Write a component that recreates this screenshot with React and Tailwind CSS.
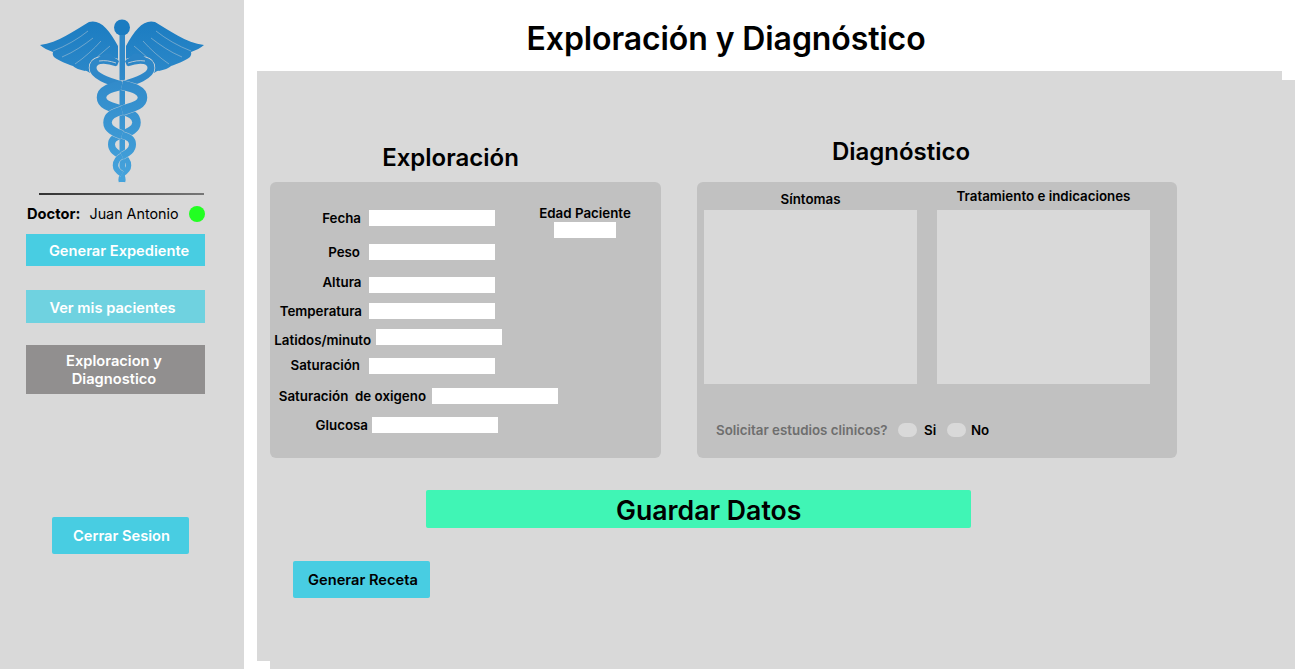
const strands = [
  { d: "M122 85C134 88 142.500 90 142.500 97.500C142.500 105 133 107 122 110.500", w: 9.500 },
  { d: "M122 110.500C113 113 107.500 116 107.500 122.500C107.500 129 114 132 122 135", w: 8.500 },
  { d: "M122 135C129 137 132.500 139 132.500 144.500C132.500 150 128 153 122 156", w: 7 },
  { d: "M122 156C118 158 115.500 161 115.500 165.500C115.500 170 118.500 172 122 174", w: 5.500 },
];

function Caduceus() {
  const wing = (
    <>
      <path d="M40 45C58 43 75 30 89 22C100 19 109 29 118 46L118 60C112 58 106 58 101 61C97 65 93 68 90 73C88 72 86 70 85 71C80 70 75 68 73 66C67 64 59 61 54 57C52 54 53 53 53 52C48 50 43 48 40 45Z" fill="url(#wing)" />
      <path d="M88 31C78 39 66 46 53 51M93 38C84 45 74 52 62 57M101 41C94 49 84 58 75 64M110 46C103 52 98 56 92 62" fill="none" stroke="#d9d9d9" strokeWidth="0.7" strokeOpacity="0.6" />
    </>
  );
  const helix = (
    <>
      {strands.map((s, i) => (
        <path key={i} d={s.d} fill="none" stroke="url(#snake)" strokeWidth={s.w} />
      ))}
      <path d="M122 174C124 176 125 178 124 182" fill="none" stroke="#45a3dc" strokeWidth="2.500" />
    </>
  );
  const outline = strands.map((s, i) => (
    <path key={i} d={s.d} fill="none" stroke="#d9d9d9" strokeOpacity="0.7" strokeWidth={s.w + 1} />
  ));
  const head = (
    <>
      <path d="M117 63C103 58 93 60 93 68C93 76 108 81 122 85" fill="none" stroke="#d9d9d9" strokeWidth="8.500" />
      <path d="M117 63C103 58 93 60 93 68C93 76 108 81 122 85" fill="none" stroke="#2f88c8" strokeWidth="7" />
      <path d="M97 60C100 54 108 52 111 54C114 57 116 59 119 61L117 66C110 62 103 61 97 60Z" fill="#2a84c6" />
      <path d="M99 61C105 60 110 61 116 63" fill="none" stroke="#d9d9d9" strokeWidth="0.8" />
    </>
  );
  return (
    <svg width="166" height="168" viewBox="39 17 166 168" className="block">
      <defs>
        <linearGradient id="wing" gradientUnits="userSpaceOnUse" x1="0" y1="20" x2="0" y2="75">
          <stop offset="0" stopColor="#1b7cc1" />
          <stop offset="1" stopColor="#2c88c9" />
        </linearGradient>
        <linearGradient id="snake" gradientUnits="userSpaceOnUse" x1="0" y1="70" x2="0" y2="180">
          <stop offset="0" stopColor="#2f88c8" />
          <stop offset="1" stopColor="#45a3dc" />
        </linearGradient>
      </defs>
      {wing}
      <g transform="matrix(-1 0 0 1 244 0)">{wing}</g>
      <circle cx="122" cy="27.500" r="8" fill="#1b7cc1" />
      <rect x="119.500" y="35" width="5.500" height="147" fill="url(#snake)" />
      <g transform="matrix(-1 0 0 1 244 0)">{head}</g>
      {head}
      <g transform="matrix(-1 0 0 1 244 0)">{helix}</g>
      {outline}
      {helix}
    </svg>
  );
}

function Sidebar() {
  return (
    <aside className="w-[244px] h-full shrink-0 bg-[#d9d9d9] flex flex-col text-white font-semibold text-[14.670px]">
      <div className="ml-[39px] mt-[17px]"><Caduceus /></div>
      <div className="ml-[39px] mt-[8px] w-[165px] h-[1.500px] bg-gradient-to-r from-[#333333] to-[#777777]" />
      <div className="ml-[27px] mt-[11px] h-[17px] flex items-center text-black">
        <span className="font-bold w-[62.500px]">Doctor:</span>
        <span className="font-normal text-[14.300px] w-[99.500px]">Juan Antonio</span>
        <span className="w-4 h-4 rounded-full bg-[#22ff22]" />
      </div>
      <div className="ml-[26px] mt-[11px] w-[179px] h-[32px] bg-[#48cde2] flex items-center justify-center pl-[7px] pt-[2px]">Generar Expediente</div>
      <div className="ml-[26px] mt-[24px] w-[179px] h-[33px] bg-[#6fd2e0] flex items-center justify-center pr-[6px] pt-[3px]">Ver mis pacientes</div>
      <div className="ml-[26px] mt-[22px] w-[179px] h-[49px] bg-[#918f8f] flex items-center justify-center pr-[3px] pt-[2px] text-center leading-[18px]">Exploracion y<br />Diagnostico</div>
      <div className="ml-[52px] mt-[123px] w-[137px] h-[37px] bg-[#48cde2] rounded-[2px] flex items-center justify-center pl-[2px] pt-[2px]">Cerrar Sesion</div>
    </aside>
  );
}

const rows = [
  { label: "Fecha", row: "mt-[28px]", lab: "w-[91px] mr-[8px]" },
  { label: "Peso", row: "mt-[18px]", lab: "w-[90px] mr-[9px]" },
  { label: "Altura", row: "mt-[17px]", lab: "w-[91.500px] mr-[7.500px] -translate-y-[3px]" },
  { label: "Temperatura", row: "mt-[10px]", lab: "w-[92px] mr-[7px]" },
  { label: "Latidos/minuto", row: "mt-[10px]", lab: "w-[101px] mr-[5px] translate-y-[3px]" },
  { label: "Saturación", row: "mt-[13px]", lab: "w-[90px] mr-[9px] -translate-y-[1px]" },
  { label: "Saturación  de oxigeno", row: "mt-[14px]", lab: "w-[156px] mr-[6px] whitespace-pre" },
  { label: "Glucosa", row: "mt-[13px]", lab: "w-[98px] mr-[4px]" },
];

function Exploracion() {
  return (
    <section className="w-[391px]">
      <h2 className="text-[24px] leading-[28px] font-semibold text-black text-center pr-[30px] mb-[10px]">Exploración</h2>
      <div className="h-[276px] bg-[#c1c1c1] rounded-[6px] flex text-[13.330px] font-semibold text-black">
        <div className="w-[269px]">
          {rows.map((r) => (
            <div key={r.label} className={`flex items-center h-4 ${r.row}`}>
              <span className={`block shrink-0 text-right leading-4 whitespace-nowrap ${r.lab}`}>{r.label}</span>
              <span className="block shrink-0 w-[126px] h-4 bg-white" />
            </div>
          ))}
        </div>
        <div className="w-[92px] pt-[23px] flex flex-col items-center">
          <span className="leading-4 whitespace-nowrap">Edad Paciente</span>
          <span className="block w-[62px] h-[16px] bg-white mt-[1px]" />
        </div>
      </div>
    </section>
  );
}

function Diagnostico() {
  return (
    <section className="w-[480px]">
      <h2 className="text-[24px] leading-[28px] font-semibold text-black text-center pr-[42px] ml-[-30px] mb-[16px]">Diagnóstico</h2>
      <div className="h-[276px] bg-[#c1c1c1] rounded-[6px] text-[13.330px] font-semibold text-black px-[7px]">
        <div className="flex gap-[20px] pt-[6px]">
          <div className="w-[213px]">
            <div className="h-[22px] leading-[22px] text-center">Síntomas</div>
            <div className="h-[174px] bg-[#d9d9d9]" />
          </div>
          <div className="w-[213px]">
            <div className="h-[22px] leading-[16px] text-center whitespace-nowrap">Tratamiento e indicaciones</div>
            <div className="h-[174px] bg-[#d9d9d9]" />
          </div>
        </div>
        <div className="flex items-center mt-[39px] ml-[12px] h-[14px]">
          <span className="w-[182px] text-[#6e6e6e] translate-y-[1px]">Solicitar estudios clinicos?</span>
          <span className="block w-[19px] h-[14px] rounded-full bg-[#d9d9d9]" />
          <span className="ml-[7px] w-[23px] translate-y-[1px]">Si</span>
          <span className="block w-[19px] h-[14px] rounded-full bg-[#d9d9d9]" />
          <span className="ml-[5px] translate-y-[1px]">No</span>
        </div>
      </div>
    </section>
  );
}

export default function App() {
  return (
    <div className="w-[1299px] h-[669px] overflow-hidden flex bg-white font-['Inter',sans-serif]">
      <Sidebar />
      <main className="relative flex-1 min-w-0">
        <h1 className="h-[71px] pl-[282.500px] pt-[19px] text-[32px] tracking-[-0.1px] leading-[39px] font-semibold text-black whitespace-nowrap">Exploración y Diagnóstico</h1>
        <div className="absolute left-[26px] top-[80px] w-[1025px] h-[590px] bg-[#d9d9d9]" />
        <div className="relative ml-[13px] w-[1025px] h-[590px] bg-[#d9d9d9]">
          <div className="flex items-end gap-[36px] pl-[13px] pt-[67px]">
            <Exploracion />
            <Diagnostico />
          </div>
          <div className="ml-[169px] mt-[32px] w-[545px] h-[38px] rounded-[2px] bg-[#40f5b5] flex items-center text-[26.670px] font-semibold text-black">
            <span className="ml-[190px] translate-y-[1px]">Guardar Datos</span>
          </div>
          <div className="ml-[36px] mt-[33px] w-[137px] h-[37px] rounded-[2px] bg-[#48cde2] flex items-center justify-center pl-[3px] text-[14.670px] font-semibold text-black">Generar Receta</div>
        </div>
      </main>
    </div>
  );
}
